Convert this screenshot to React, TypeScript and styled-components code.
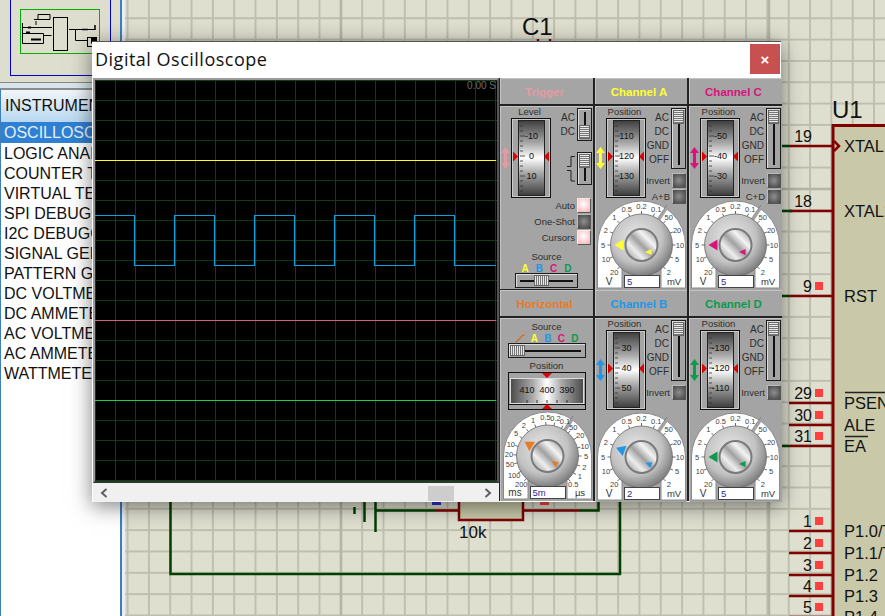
import React from 'react';
import styled, { createGlobalStyle } from 'styled-components';

const GlobalStyle = createGlobalStyle`
  html, body { margin: 0; padding: 0; background: #fff; }
  body { font-family: "Liberation Sans", Arial, sans-serif; }
`;

const WIRE_RED = '#800000';
const WIRE_GREEN = '#004000';

const Page = styled.div`
  position: relative;
  width: 885px;
  height: 616px;
  overflow: hidden;
  display: flex;
  background: #fff;
`;

/* ---------- sidebar ---------- */

const Sidebar = styled.div`
  width: 120px;
  flex: none;
  display: flex;
  flex-direction: column;
  background: #d8e4ee;
`;

const Overview = styled.div`
  height: 83px;
  flex: none;
  background: #dedecf;
  border-bottom: 1px solid #8a8a80;
  box-sizing: border-box;
`;

const ListPanel = styled.div`
  margin-top: 5px;
  flex: 1;
  background: #fff;
  border-top: 2px solid #8c8c8c;
  border-left: 1px solid #3d7fb8;
  display: flex;
  flex-direction: column;
  overflow: hidden;
`;

const ListHeader = styled.div`
  height: 32px;
  flex: none;
  display: flex;
  align-items: center;
  padding-left: 4px;
  font-size: 16px;
  color: #111;
  white-space: nowrap;
  background: linear-gradient(#f1f6fa, #b8d8f0);
`;

const ListItem = styled.div<{ $active?: boolean }>`
  height: ${({ $active }) => ($active ? 21 : 20)}px;
  flex: none;
  line-height: 22px;
  padding-left: 3px;
  font-size: 16px;
  white-space: nowrap;
  color: ${({ $active }) => ($active ? '#e4f0fb' : '#111')};
  background: ${({ $active }) => ($active ? '#2f80d2' : 'transparent')};
`;

const Splitter = styled.div`
  width: 5px;
  flex: none;
  background: linear-gradient(to right, #3d7fb8 0 2px, #e8eef2 2px 100%);
`;

const Canvas = styled.div`
  position: relative;
  flex: 1;
  background-color: #dfdfd0;
  background-image:
    linear-gradient(to right, #bfbfae 1.5px, transparent 1.5px),
    linear-gradient(to bottom, #bfbfae 1.5px, transparent 1.5px);
  background-size: 21.33px 21.33px;
  background-position: 1.6px 17.3px;
`;

const SchematicSvg = styled.svg`
  display: block;
  font-family: "Liberation Sans", Arial, sans-serif;
`;

const items = [
  'OSCILLOSCOPE', 'LOGIC ANALYSER', 'COUNTER TIMER', 'VIRTUAL TERMINAL', 'SPI DEBUGGER',
  'I2C DEBUGGER', 'SIGNAL GENERATOR', 'PATTERN GENERATOR', 'DC VOLTMETER', 'DC AMMETER',
  'AC VOLTMETER', 'AC AMMETER', 'WATTMETER',
];

const Thumbnail = () => (
  <svg width={120} height={82} viewBox="0 0 120 82" style={{ display: 'block' }}>
    <g fill="none" strokeWidth={1}>
      <rect x={10.5} y={-5} width={100} height={80.5} stroke="#0000c8" />
      <rect x={20.5} y={9.5} width={79} height={44} stroke="#00b000" />
      <g stroke="#000">
        <rect x={53.5} y={17.5} width={14} height={33} />
        <path d="M22.5 23v20.5h21v-10h-21M22.5 27.5h29.5M43.5 35.5h8M69 29.5h26M75.5 29.5v11h12M34 19.5h4v-5h12v5h-12M36 21v4" />
        <path d="M82 29.5h6M95 25v5" strokeWidth={1.5} />
        <rect x={87.5} y={37.5} width={9} height={9} />
        <path d="M28 27.5h3M26 32.5h4M31 39.5h10" strokeWidth={2} />
      </g>
      <rect x={91} y={37.5} width={5} height={6} fill="#000" />
    </g>
  </svg>
);

/* ---------- schematic behind the window ---------- */

type Pin = { no: string; y: number; label: string; square?: boolean };

const pins: Pin[] = [
  { no: '19', y: 146, label: 'XTAL1' },
  { no: '18', y: 211, label: 'XTAL2' },
  { no: '9', y: 296, label: 'RST', square: true },
  { no: '29', y: 403, label: 'PSEN', square: true },
  { no: '30', y: 425, label: 'ALE', square: true },
  { no: '31', y: 446, label: 'EA', square: true },
  { no: '1', y: 531, label: 'P1.0/T2', square: true },
  { no: '2', y: 553, label: 'P1.1/T2EX', square: true },
  { no: '3', y: 575, label: 'P1.2', square: true },
  { no: '4', y: 596, label: 'P1.3', square: true },
  { no: '5', y: 617, label: 'P1.4', square: true },
];

const Schematic = () => (
  <SchematicSvg width={760} height={616} viewBox="125 0 760 616">
    <g stroke="#b5b5a4" strokeWidth={2.5}>
      <path d="M341 0V616M769 0V616M125 189H885" />
    </g>
    <text x={522} y={35} fontSize={24} fill="#111">C1</text>
    <path d="M538 39v3M550 39v3" stroke={WIRE_RED} strokeWidth={2.5} />
    <text x={832} y={118} fontSize={24} fill="#111">U1</text>
    <rect x={833} y={125.5} width={70} height={510} fill="#c9c9aa" stroke={WIRE_RED} strokeWidth={3} />
    {pins.map((p) => (
      <g key={p.no}>
        <path d={`M789 ${p.y}H833`} stroke={WIRE_RED} strokeWidth={2.5} fill="none" />
        <text x={812} y={p.y - 4} textAnchor="end" fontSize={16} fill="#111">{p.no}</text>
        {p.square && <rect x={815} y={p.y - 14} width={8} height={8} fill="#ff4040" />}
        <text x={844} y={p.y + 6} fontSize={16.5} fill="#111">{p.label}</text>
      </g>
    ))}
    <path d="M781 146h8M781 211h11M781 296h8M781 446h8" stroke={WIRE_GREEN} strokeWidth={2.5} />
    <path d="M834 141l5 5-5 5" fill="none" stroke={WIRE_RED} strokeWidth={2.5} />
    <path d="M845 392.5H885M845 436.5H868" stroke="#222" strokeWidth={1.5} />
    <g fill="none" strokeWidth={2.5}>
      <path d="M170.5 500V574H620V500" stroke={WIRE_GREEN} />
      <path d="M376 510.5H436M580 510.5H598.5V500" stroke={WIRE_GREEN} />
      <path d="M436 510.5H458M524 510.5H580" stroke={WIRE_RED} />
      <path d="M364.5 500V522M375.5 500V532" stroke={WIRE_GREEN} />
      <path d="M354.5 507V514" stroke={WIRE_GREEN} />
    </g>
    <rect x={459} y={500} width={64} height={20} fill="#c9c9aa" stroke={WIRE_RED} strokeWidth={2.5} />
    <rect x={432} y={500} width={9} height={5} fill="#3030d0" />
    <rect x={540} y={500} width={9} height={5} fill="#ff4040" />
    <text x={459} y={538} fontSize={17} fill="#111">10k</text>
  </SchematicSvg>
);

/* ---------- oscilloscope window ---------- */

const Window = styled.div`
  position: absolute;
  left: 92px;
  top: 41px;
  width: 689px;
  height: 461px;
  display: flex;
  flex-direction: column;
  background: #fff;
  border-top: 1px solid #555;
  box-sizing: border-box;
  box-shadow: 0 4px 20px rgba(0, 0, 0, 0.5);
`;

const TitleBar = styled.div`
  height: 36px;
  flex: none;
  display: flex;
  justify-content: space-between;
  padding-left: 3px;
`;

const Title = styled.div`
  font-family: "Open Sans", sans-serif;
  font-size: 18px;
  letter-spacing: 0.5px;
  line-height: 34px;
  color: #111;
`;

const CloseButton = styled.button`
  width: 30px;
  height: 30px;
  border: none;
  padding: 0;
  margin: 2px 1px 0 0;
  background: #c75050;
  color: #fff;
  font: bold 15px "Liberation Sans", sans-serif;
`;

const WindowBody = styled.div`
  flex: 1;
  display: flex;
  min-height: 0;
`;

const ScopeColumn = styled.div`
  width: 406px;
  flex: none;
  display: flex;
  flex-direction: column;
  margin-left: 1px;
`;

const Screen = styled.div`
  position: relative;
  height: 405px;
  flex: none;
  box-sizing: border-box;
  border: 2px solid #9a9a9a;
  border-right-color: #555;
  border-bottom-color: #333;
  background-color: #000;
  background-image:
    linear-gradient(to right, #0f3d12 1px, transparent 1px),
    linear-gradient(to bottom, #0f3d12 1px, transparent 1px);
  background-size: 20px 20px;
`;

const Trace = styled.svg`
  display: block;
`;

const TimeLabel = styled.div`
  position: absolute;
  right: 1px;
  top: 0;
  font-size: 10px;
  color: #6b6b6b;
`;

const Scrollbar = styled.div`
  position: relative;
  flex: 1;
  display: flex;
  align-items: center;
  justify-content: space-between;
  padding: 0 7px;
  background: #f0f0f0;
`;

const ScrollThumb = styled.div`
  position: absolute;
  left: 335px;
  bottom: 1px;
  width: 26px;
  height: 15px;
  background: #cdcdcd;
`;

const PanelGrid = styled.div`
  flex: 1;
  display: grid;
  grid-template-columns: 93px 92px 93px;
  grid-template-rows: 211px 211px;
  column-gap: 2px;
  row-gap: 1px;
  background: #222;
  padding-left: 1px;
  height: 423px;
`;

const Cell = styled.div`
  display: flex;
  flex-direction: column;
  background: #222;
  min-width: 0;
`;

const CellHeader = styled.div<{ $color: string }>`
  height: 26px;
  flex: none;
  box-sizing: border-box;
  display: flex;
  align-items: center;
  justify-content: center;
  margin-bottom: 2px;
  padding: 2px 4px 0 0;
  font-size: 11.5px;
  font-weight: bold;
  color: ${({ $color }) => $color};
  background: #a5a5a5;
  box-shadow: inset 1px 1px 0 #c4c4c4;
`;

const CellBody = styled.div`
  position: relative;
  flex: 1;
  display: flex;
  flex-direction: column;
  justify-content: space-between;
  background: #a4a4a4;
  box-shadow: inset 1px 1px 0 #c4c4c4;
  color: #2e2e2e;
  font-size: 9.5px;
`;

/* channel layout */

const TopRow = styled.div`
  height: 94px;
  flex: none;
  display: flex;
`;

const DrumColumn = styled.div`
  width: 52px;
  flex: none;
  display: flex;
  flex-direction: column;
  align-items: stretch;
`;

const SmallLabel = styled.div`
  height: 12px;
  flex: none;
  line-height: 12px;
  text-align: center;
  font-size: 9.5px;
  color: #2e2e2e;
`;

const DrumLabel = styled(SmallLabel)`
  padding-left: 7px;
`;

const DrumRow = styled.div`
  display: flex;
  align-items: center;
  gap: 1px;
  padding-left: 1px;
`;

const ControlColumn = styled.div`
  flex: 1;
  min-width: 0;
  padding: 2px 1px 0 0;
  display: flex;
  flex-direction: column;
`;

const ModeRow = styled.div`
  display: flex;
  justify-content: flex-end;
  gap: 2px;
  height: 61px;
  margin-bottom: 3px;
`;

const ModeLabels = styled.div`
  padding-top: 3px;
  text-align: right;
  line-height: 14px;
  font-size: 10px;
`;

const ButtonRow = styled.div`
  display: flex;
  align-items: center;
  justify-content: flex-end;
  gap: 2px;
  height: 16px;
  flex: none;
  font-size: 9.5px;
  white-space: nowrap;
`;

const LedButton = styled.div<{ $on?: boolean }>`
  width: 14px;
  height: 15px;
  flex: none;
  box-sizing: border-box;
  border: 1px solid ${({ $on }) => ($on ? '#eee' : '#bbb')};
  border-right-color: #555;
  border-bottom-color: #555;
  background: ${({ $on }) =>
    $on ? 'radial-gradient(circle at 45% 40%, #fff, #f7b0b0)' : 'radial-gradient(circle, #8e8e8e, #444)'};
`;

const VSliderFrame = styled.div<{ $height: number }>`
  position: relative;
  width: 15px;
  height: ${({ $height }) => $height}px;
  flex: none;
  box-sizing: border-box;
  border: 1px solid #1c1c1c;
  box-shadow: inset 1px 1px 0 #ddd;
  background: linear-gradient(#111, #111) center / 2px calc(100% - 6px) no-repeat #a4a4a4;
`;

const VThumb = styled.div<{ $bottom?: boolean }>`
  position: absolute;
  left: 1px;
  width: 11px;
  height: 14px;
  ${({ $bottom }) => ($bottom ? 'bottom: 1px;' : 'top: 1px;')}
  box-sizing: border-box;
  border: 1px solid #666;
  background: repeating-linear-gradient(#e8e8e8 0 1px, #777 1px 2px);
`;

const HSliderFrame = styled.div<{ $width: number }>`
  position: relative;
  width: ${({ $width }) => $width}px;
  height: 15px;
  flex: none;
  box-sizing: border-box;
  border: 1px solid #1c1c1c;
  box-shadow: inset 1px 1px 0 #ddd;
  background: linear-gradient(#111, #111) center / calc(100% - 8px) 2px no-repeat #a4a4a4;
`;

const HThumb = styled.div<{ $left: number }>`
  position: absolute;
  top: 1px;
  left: ${({ $left }) => $left}px;
  width: 15px;
  height: 11px;
  box-sizing: border-box;
  border: 1px solid #666;
  background: repeating-linear-gradient(to right, #e8e8e8 0 1px, #777 1px 2px);
`;

/* knob */

const KnobWrap = styled.div`
  position: relative;
  width: 92px;
  height: 90px;
  flex: none;
`;

const KnobSvg = styled.svg`
  display: block;
  font-family: "Liberation Sans", Arial, sans-serif;
`;

const ValueBox = styled.div`
  position: absolute;
  left: 29px;
  bottom: 2px;
  width: 36px;
  height: 13px;
  box-sizing: border-box;
  border: 1px solid #444;
  background: #fff;
  padding-left: 2px;
  line-height: 11px;
  font-size: 9.5px;
  color: #2a2a9a;
`;

/* trigger column */

const TriggerBody = styled(CellBody)`
  justify-content: flex-start;
`;

const TriggerTop = styled(TopRow)`
  height: 91px;
`;

const SwitchRow = styled.div<{ $gap?: number }>`
  display: flex;
  justify-content: flex-end;
  gap: 2px;
  margin-bottom: ${({ $gap }) => $gap ?? 0}px;
`;

const TriggerButtons = styled.div`
  display: flex;
  flex-direction: column;
  padding-right: 2px;
`;

const SourceBlock = styled.div`
  display: flex;
  flex-direction: column;
  align-items: center;
  margin-top: auto;
  padding-bottom: 1px;
`;

const SourceLetters = styled.div<{ $width: number }>`
  width: ${({ $width }) => $width}px;
  height: 10px;
  flex: none;
  display: flex;
  align-items: center;
  justify-content: space-between;
  font-size: 10px;
  font-weight: bold;
`;

const Letter = styled.span<{ $color: string }>`
  color: ${({ $color }) => $color};
`;

const HorizontalBody = styled(CellBody)`
  align-items: center;
  justify-content: flex-start;
  padding-top: 3px;
`;

const PositionLabel = styled(SmallLabel)`
  margin-top: 2px;
`;

const KnobFoot = styled.div`
  margin-top: auto;
`;

const DoubleArrow = ({ color }: { color: string }) => (
  <svg width={9} height={22} viewBox="0 0 9 22" style={{ flex: 'none' }}>
    <path d="M4.5 0L9 6H6V16H9L4.5 22L0 16H3V6H0Z" fill={color} />
  </svg>
);

const Drum = ({ labels }: { labels: string[] }) => (
  <svg width={40} height={80} viewBox="0 0 40 80" style={{ flex: 'none', fontFamily: '"Liberation Sans", sans-serif' }}>
    <rect x={0.5} y={0.5} width={39} height={79} fill="#a4a4a4" stroke="#111" />
    <rect x={1.5} y={1.5} width={37} height={77} fill="none" stroke="#e6e6e6" strokeWidth={0.6} />
    <rect x={7.5} y={2.5} width={26} height={75} fill="url(#vDrum)" stroke="#222" />
    {Array.from({ length: 15 }, (_, i) => (
      <path key={i} d={`M9 ${3 + i * 5}h${i % 4 === 3 ? 5 : 3}`} stroke="#333" strokeWidth={0.8} />
    ))}
    {labels.map((l, i) => (
      <text key={l} x={20.5} y={21 + i * 20} textAnchor="middle" fontSize={9} fill="#111">{l}</text>
    ))}
    <path d="M2 33.5l5 5-5 5zM38 33.5l-5 5 5 5z" fill="#e00000" />
  </svg>
);

const HorizontalDrum = () => (
  <svg width={78} height={38} viewBox="0 0 78 38" style={{ display: 'block', flex: 'none', fontFamily: '"Liberation Sans", sans-serif' }}>
    <rect x={0.5} y={0.5} width={77} height={37} fill="#a4a4a4" stroke="#111" />
    <rect x={2.5} y={6.5} width={73} height={25} fill="url(#hDrum)" stroke="#ddd" />
    <path d="M1 32.5H77" stroke="#111" />
    {['410', '400', '390'].map((l, i) => (
      <text key={l} x={19 + i * 20} y={21} textAnchor="middle" fontSize={9} fill="#111">{l}</text>
    ))}
    {[-2, -1, 0, 1, 2].map((k) => (
      <path key={k} d={`M${39 + k * 10} 28v3`} stroke="#333" />
    ))}
    <path d="M34 1h10l-5 5zM34 37h10l-5-5z" fill="#e00000" />
  </svg>
);

type Mark = [string, number];

const voltMarks: Mark[] = [
  ['20', -135], ['10', -112.5], ['5', -90], ['2', -67.5], ['1', -45], ['0.5', -22.5], ['0.2', 0], ['0.1', 22.5],
  ['50', 45], ['20', 67.5], ['10', 90], ['5', 112.5], ['2', 135],
];

const timeMarks: Mark[] = [
  ['200', -137], ['100', -120], ['50', -103], ['20', -88], ['10', -72], ['5', -55], ['2', -38], ['1', -22],
  ['0.5', -3], ['0.2', 12], ['0.1', 27], ['50', 42], ['20', 58], ['10', 75], ['5', 90], ['2', 107], ['1', 123], ['0.5', 138],
];

type KnobProps = {
  color: string;
  angle: number;
  value: string;
  marks?: Mark[];
  left?: string;
  right?: string;
};

const CX = 46.5;
const CY = 45;

const Knob = ({ color, angle, value, marks = voltMarks, left = 'V', right = 'mV' }: KnobProps) => (
  <KnobWrap>
    <KnobSvg width={92} height={90} viewBox="0 0 92 90">
      <path d="M2.5 88V45A44 44 0 0 1 90.5 45V88H66V62H27V88Z" fill="#fff" stroke="#8a8a8a" />
      <path d="M59 27L73 6" stroke="#a4a4a4" strokeWidth={3} />
      <path d="M58 25L72 5" stroke="#777" strokeWidth={0.8} />
      {marks.map(([label, a], i) => {
        const r = (a * Math.PI) / 180;
        const sin = Math.sin(r);
        const cos = Math.cos(r);
        return (
          <g key={i}>
            <path d={`M${CX + 30 * sin} ${CY - 30 * cos}L${CX + 34 * sin} ${CY - 34 * cos}`} stroke="#444" strokeWidth={0.8} />
            <text x={CX + 38.5 * sin} y={CY - 38.5 * cos + 2.5} textAnchor="middle" fontSize={7.5} fill="#444">{label}</text>
          </g>
        );
      })}
      <text x={14} y={85} textAnchor="middle" fontSize={10} fill="#333">{left}</text>
      <text x={79} y={85} textAnchor="middle" fontSize={9.5} fill="#333">{right}</text>
      <circle cx={CX} cy={CY} r={31} fill="url(#knobBody)" />
      <circle cx={CX} cy={CY} r={31} fill="none" stroke="#6c6c6c" strokeWidth={0.8} />
      <circle cx={CX} cy={CY} r={17} fill="#7a7a7a" />
      <circle cx={CX} cy={CY} r={15} fill="url(#knobCap)" />
      <polygon
        points={`${CX},${CY - 27} ${CX - 5.5},${CY - 18} ${CX + 5.5},${CY - 18}`}
        fill={color}
        transform={`rotate(${angle} ${CX} ${CY})`}
      />
      <polygon
        points="0,-3.5 -3,3 3,3"
        fill={color}
        transform={`translate(${CX + 7} ${CY + 7}) rotate(${angle})`}
      />
    </KnobSvg>
    <ValueBox>{value}</ValueBox>
  </KnobWrap>
);

type ChannelProps = {
  name: string;
  color: string;
  labels: string[];
  value: string;
  angle: number;
  sum?: string;
};

const Channel = ({ name, color, labels, value, angle, sum }: ChannelProps) => (
  <Cell>
    <CellHeader $color={color}>{name}</CellHeader>
    <CellBody>
      <TopRow>
        <DrumColumn>
          <DrumLabel>Position</DrumLabel>
          <DrumRow>
            <DoubleArrow color={color} />
            <Drum labels={labels} />
          </DrumRow>
        </DrumColumn>
        <ControlColumn>
          <ModeRow>
            <ModeLabels>AC<br />DC<br />GND<br />OFF</ModeLabels>
            <VSliderFrame $height={61}><VThumb /></VSliderFrame>
          </ModeRow>
          <ButtonRow>Invert <LedButton /></ButtonRow>
          {sum && <ButtonRow>{sum} <LedButton /></ButtonRow>}
        </ControlColumn>
      </TopRow>
      <Knob color={color} angle={angle} value={value} />
    </CellBody>
  </Cell>
);

const sources: [string, string][] = [
  ['A', '#ffff33'], ['B', '#1f97e6'], ['C', '#d8147c'], ['D', '#0d9a4d'],
];

const Trigger = () => (
  <Cell>
    <CellHeader $color="#e39aa2">Trigger</CellHeader>
    <TriggerBody>
      <TriggerTop>
        <DrumColumn>
          <DrumLabel>Level</DrumLabel>
          <DrumRow>
            <DoubleArrow color="#e39aa2" />
            <Drum labels={['-10', '0', '10']} />
          </DrumRow>
        </DrumColumn>
        <ControlColumn>
          <SwitchRow $gap={11}>
            <ModeLabels>AC<br />DC</ModeLabels>
            <VSliderFrame $height={33}><VThumb $bottom /></VSliderFrame>
          </SwitchRow>
          <SwitchRow>
            <svg width={8} height={30} viewBox="0 0 8 30">
              <path d="M0 14.5H4V4.5H8M0 18.5H4V29H8" fill="none" stroke="#222" />
            </svg>
            <VSliderFrame $height={33}><VThumb /></VSliderFrame>
          </SwitchRow>
        </ControlColumn>
      </TriggerTop>
      <TriggerButtons>
        <ButtonRow>Auto <LedButton $on /></ButtonRow>
        <ButtonRow>One-Shot <LedButton /></ButtonRow>
        <ButtonRow>Cursors <LedButton $on /></ButtonRow>
      </TriggerButtons>
      <SourceBlock>
        <SmallLabel>Source</SmallLabel>
        <SourceLetters $width={50}>
          {sources.map(([l, c]) => <Letter key={l} $color={c}>{l}</Letter>)}
        </SourceLetters>
        <HSliderFrame $width={63}><HThumb $left={18} /></HSliderFrame>
      </SourceBlock>
    </TriggerBody>
  </Cell>
);

const Horizontal = () => (
  <Cell>
    <CellHeader $color="#e67c25">Horizontal</CellHeader>
    <HorizontalBody>
      <SmallLabel>Source</SmallLabel>
      <SourceLetters $width={64}>
        <svg width={10} height={8} viewBox="0 0 10 8"><path d="M0 7.5H2L8 1H10" fill="none" stroke="#d06a1a" strokeWidth={1.2} /></svg>
        {sources.map(([l, c]) => <Letter key={l} $color={c}>{l}</Letter>)}
      </SourceLetters>
      <HSliderFrame $width={78}><HThumb $left={1} /></HSliderFrame>
      <PositionLabel>Position</PositionLabel>
      <HorizontalDrum />
      <KnobFoot>
        <Knob color="#e67c25" angle={-58} value="5m" marks={timeMarks} left="ms" right="µs" />
      </KnobFoot>
    </HorizontalBody>
  </Cell>
);

const App = () => (
  <Page>
    <GlobalStyle />
    <svg width={0} height={0} style={{ position: 'absolute' }}>
      <defs>
        <linearGradient id="vDrum" x1="0" y1="0" x2="0" y2="1">
          <stop offset="0" stopColor="#3e3e3e" />
          <stop offset="0.3" stopColor="#a8a8a8" />
          <stop offset="0.5" stopColor="#ffffff" />
          <stop offset="0.7" stopColor="#a8a8a8" />
          <stop offset="1" stopColor="#3e3e3e" />
        </linearGradient>
        <linearGradient id="hDrum" x1="0" y1="0" x2="1" y2="0">
          <stop offset="0" stopColor="#4a4a4a" />
          <stop offset="0.3" stopColor="#a8a8a8" />
          <stop offset="0.5" stopColor="#ffffff" />
          <stop offset="0.7" stopColor="#a8a8a8" />
          <stop offset="1" stopColor="#4a4a4a" />
        </linearGradient>
        <radialGradient id="knobBody" cx="0.42" cy="0.38" r="0.68">
          <stop offset="0" stopColor="#e8e8e8" />
          <stop offset="0.6" stopColor="#c2c2c2" />
          <stop offset="1" stopColor="#6e6e6e" />
        </radialGradient>
        <linearGradient id="knobCap" x1="0" y1="1" x2="1" y2="0">
          <stop offset="0" stopColor="#8e8e8e" />
          <stop offset="0.3" stopColor="#eeeeee" />
          <stop offset="0.5" stopColor="#a0a0a0" />
          <stop offset="0.7" stopColor="#f4f4f4" />
          <stop offset="1" stopColor="#8e8e8e" />
        </linearGradient>
      </defs>
    </svg>
    <Sidebar>
      <Overview><Thumbnail /></Overview>
      <ListPanel>
        <ListHeader>INSTRUMENTS</ListHeader>
        {items.map((item, i) => (
          <ListItem key={item} $active={i === 0}>{item}</ListItem>
        ))}
      </ListPanel>
    </Sidebar>
    <Splitter />
    <Canvas><Schematic /></Canvas>
    <Window>
      <TitleBar>
        <Title>Digital Oscilloscope</Title>
        <CloseButton>×</CloseButton>
      </TitleBar>
      <WindowBody>
        <ScopeColumn>
          <Screen>
            <Trace width={401} height={401} viewBox="95 81 401 401">
              <g fill="none" strokeWidth={1.2}>
                <path d="M95 161.5H496" stroke="#ffff20" />
                <path d="M95 321.5H496" stroke="#d0607c" />
                <path d="M95 401.5H496" stroke="#20d040" />
                <path
                  d="M95 216.5H134.5V266.5H174.5V216.5H214.5V266.5H254.5V216.5H294.5V266.5H334.5V216.5H374.5V266.5H414.5V216.5H454.5V266.5H496"
                  stroke="#10a0e0"
                />
              </g>
            </Trace>
            <TimeLabel>0.00 S</TimeLabel>
          </Screen>
          <Scrollbar>
            <svg width={8} height={10} viewBox="0 0 8 10"><path d="M6.5 1L2 5l4.5 4" fill="none" stroke="#606060" strokeWidth={2} /></svg>
            <ScrollThumb />
            <svg width={8} height={10} viewBox="0 0 8 10"><path d="M1.5 1L6 5 1.5 9" fill="none" stroke="#606060" strokeWidth={2} /></svg>
          </Scrollbar>
        </ScopeColumn>
        <PanelGrid>
          <Trigger />
          <Channel name="Channel A" color="#ffff33" labels={['110', '120', '130']} value="5" angle={-90} sum="A+B" />
          <Channel name="Channel C" color="#d8147c" labels={['-50', '-40', '-30']} value="5" angle={-90} sum="C+D" />
          <Horizontal />
          <Channel name="Channel B" color="#1f97e6" labels={['30', '40', '50']} value="2" angle={-70} />
          <Channel name="Channel D" color="#0d9a4d" labels={['-130', '-120', '-110']} value="5" angle={-90} />
        </PanelGrid>
      </WindowBody>
    </Window>
  </Page>
);

export default App;
